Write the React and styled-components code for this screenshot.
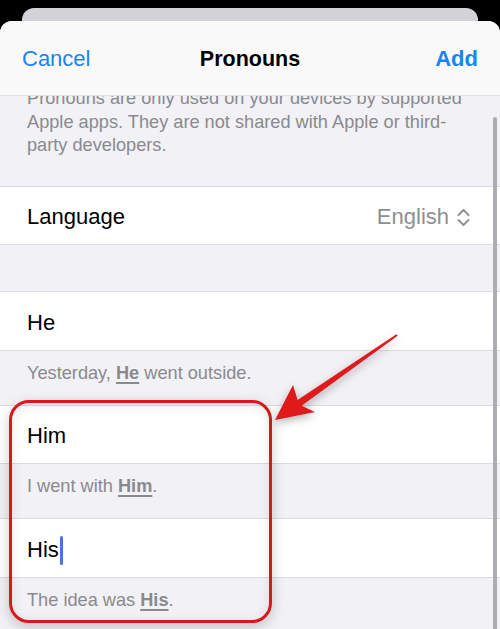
import styled, { createGlobalStyle } from 'styled-components';

const GlobalStyle = createGlobalStyle`
    html, body {
        margin: 0;
        padding: 0;
        background: #000;
    }
    body {
        font-family: "Liberation Sans", Arial, sans-serif;
        -webkit-font-smoothing: antialiased;
    }
`;

const pronouns = [
    { word: 'He', before: 'Yesterday, ', after: ' went outside.' },
    { word: 'Him', before: 'I went with ', after: '.' },
    { word: 'His', before: 'The idea was ', after: '.', editing: true },
];

const ChevronUpDown = () => (
    <svg width="15" height="21" viewBox="0 0 15 21" fill="none">
        <path d="M2.5 8 L7.5 3 L12.5 8" stroke="#8e8e93" strokeWidth="1.9" strokeLinecap="round" strokeLinejoin="round" />
        <path d="M2.5 13 L7.5 18 L12.5 13" stroke="#8e8e93" strokeWidth="1.9" strokeLinecap="round" strokeLinejoin="round" />
    </svg>
);

const Arrow = () => (
    <ArrowSvg width="500" height="629" viewBox="0 0 500 629">
        <polygon
            points="396.4,334.2 297.6,399.9 293,385 275,420 315,412 301.6,405.7 397.6,335.8"
            fill="#e0191b"
            strokeLinejoin="round"
        />
    </ArrowSvg>
);

const App = () => {
    return (
        <Screen>
            <GlobalStyle />
            <BackCard />
            <Sheet>
                <Header>
                    <NavButton>Cancel</NavButton>
                    <Title>Pronouns</Title>
                    <NavButton $bold $align="right">Add</NavButton>
                </Header>
                <Body>
                    <Footnote>
                        Pronouns are only used on your devices by supported<br />
                        Apple apps. They are not shared with Apple or third-<br />
                        party developers.
                    </Footnote>
                    <Row>
                        <Label>Language</Label>
                        <Value>
                            English
                            <ChevronUpDown />
                        </Value>
                    </Row>
                    <Spacer />
                    {pronouns.map((p) => (
                        <div key={p.word}>
                            <Row>
                                <Label>
                                    {p.word}
                                    {p.editing && <Caret />}
                                </Label>
                            </Row>
                            <Caption>
                                {p.before}
                                <Strong>{p.word}</Strong>
                                {p.after}
                            </Caption>
                        </div>
                    ))}
                    <ScrollThumb />
                </Body>
            </Sheet>
            <Highlight />
            <Arrow />
        </Screen>
    );
};

const Screen = styled.div`
    position: relative;
    width: 500px;
    height: 629px;
    overflow: hidden;
    background: #000;
`;

const BackCard = styled.div`
    height: 13px;
    margin: 8px 22px 0;
    background: #d3d3d7;
    border-radius: 12px 12px 0 0;
`;

const Sheet = styled.div`
    display: flex;
    flex-direction: column;
    height: 608px;
    background: #f1f1f6;
    border-radius: 12px 12px 0 0;
    overflow: hidden;
`;

const Header = styled.div`
    display: grid;
    grid-template-columns: 1fr auto 1fr;
    align-items: center;
    box-sizing: border-box;
    height: 75px;
    padding: 2px 22px 0;
    background: #f9f9f9;
    border-bottom: 1px solid #e2e2e5;
    position: relative;
    z-index: 2;
    flex-shrink: 0;
`;

const NavButton = styled.div`
    color: #1b84f4;
    font-size: 22px;
    font-weight: ${(p) => (p.$bold ? 700 : 400)};
    text-align: ${(p) => p.$align || 'left'};
`;

const Title = styled.div`
    color: #000;
    font-size: 21.5px;
    font-weight: 700;
`;

const Body = styled.div`
    position: relative;
    flex: 1;
    overflow: hidden;
`;

const Footnote = styled.div`
    margin-top: -9px;
    padding: 0 27px 28px;
    color: #8a8a8e;
    font-size: 18.2px;
    line-height: 23.5px;
    white-space: nowrap;
`;

const Row = styled.div`
    display: flex;
    align-items: center;
    justify-content: space-between;
    box-sizing: border-box;
    height: 59.6px;
    padding: 4px 27px 0;
    background: #fff;
    border-top: 1px solid #dcdce0;
    border-bottom: 1px solid #dcdce0;
    & + & {
        border-top: none;
    }
`;

const Label = styled.div`
    display: flex;
    align-items: center;
    color: #000;
    font-size: 22px;
`;

const Value = styled.div`
    display: flex;
    align-items: center;
    gap: 7px;
    margin-right: 2px;
    color: #8e8e93;
    font-size: 22px;
`;

const Caret = styled.span`
    display: inline-block;
    width: 3px;
    height: 29px;
    margin-left: 1px;
    border-radius: 1.5px;
    background: #4a72e8;
`;

const Spacer = styled.div`
    height: 46px;
`;

const Caption = styled.div`
    box-sizing: border-box;
    height: 54px;
    padding: 12px 27px 0;
    color: #8a8a8e;
    font-size: 18.2px;
    line-height: 21px;
`;

const Strong = styled.span`
    font-weight: 700;
    text-decoration: underline;
    text-decoration-thickness: 1.5px;
    text-underline-offset: 3px;
`;

const ScrollThumb = styled.div`
    position: absolute;
    top: 21px;
    right: 3px;
    bottom: -20px;
    width: 4px;
    border-radius: 2px;
    background: #adadb1;
`;

const Highlight = styled.div`
    position: absolute;
    left: 9px;
    top: 400px;
    width: 263px;
    height: 223px;
    box-sizing: border-box;
    border: 3px solid #d7191b;
    border-radius: 20px;
    box-shadow: 0 4px 14px rgba(0, 0, 0, 0.2), inset 0 2px 12px rgba(0, 0, 0, 0.1);
    pointer-events: none;
`;

const ArrowSvg = styled.svg`
    position: absolute;
    left: 0;
    top: 0;
    pointer-events: none;
    filter: drop-shadow(0 3px 4px rgba(0, 0, 0, 0.3));
`;

export default App;
